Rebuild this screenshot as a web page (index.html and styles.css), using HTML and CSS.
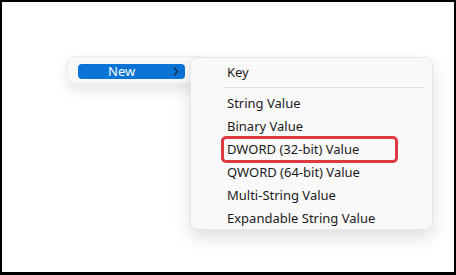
FILE: index.html
```html
<!DOCTYPE html>
<html>
<head>
<meta charset="utf-8">
<link rel="stylesheet" href="styles.css">
</head>
<body>
<div class="frame">
  <div class="menu parent">
    <div class="item active">
      <span class="label">New</span>
      <svg class="chev" width="6" height="9" viewBox="0 0 6 9"><path d="M1.5 1 L4.5 4.5 L1.5 8" fill="none" stroke="#1a2a4a" stroke-width="1.2" stroke-linecap="round" stroke-linejoin="round"/></svg>
    </div>
  </div>
  <div class="menu sub">
    <div class="row">Key</div>
    <div class="sep"></div>
    <div class="row">String Value</div>
    <div class="row">Binary Value</div>
    <div class="row marked">DWORD (32-bit) Value</div>
    <div class="row">QWORD (64-bit) Value</div>
    <div class="row">Multi-String Value</div>
    <div class="row">Expandable String Value</div>
    <div class="clip"></div>
  </div>
</div>
</body>
</html>
```

FILE: styles.css
```css
html, body {
  margin: 0;
  padding: 0;
  background: #000;
}
.frame {
  position: relative;
  box-sizing: border-box;
  width: 456px;
  height: 272px;
  margin: 2px 2px 0 2px;
  width: 452px;
  height: 270px;
  background: #fff;
  overflow: hidden;
  font-family: "Noto Sans", "Open Sans", sans-serif;
  color: #1b1b1b;
}
.menu {
  position: absolute;
  box-sizing: border-box;
  background: #f9f9f9;
  border-radius: 8px;
}
.parent {
  left: 65px;
  top: 54px;
  width: 140px;
  height: 28px;
  padding: 7px 10px;
  border: 1px solid #ececec;
  box-shadow: 0 6px 14px rgba(0,0,0,0.10);
}
.parent .item {
  display: flex;
  align-items: center;
  height: 15px;
  width: 107px;
  background: #0a73d6;
  border-radius: 4px;
  box-sizing: border-box;
  padding-left: 30px;
  padding-right: 6px;
}
.parent .label {
  flex: 1;
  color: #fff;
  font-size: 13px;
  line-height: 15px;
}
.sub {
  left: 188px;
  top: 55px;
  width: 243px;
  height: 173px;
  padding: 3px 0 0 0;
  border: 1px solid #e6e6e6;
  box-shadow: 0 8px 18px rgba(0,0,0,0.13);
  overflow: hidden;
}
.row {
  height: 23px;
  line-height: 23px;
  padding-left: 36px;
  font-size: 13px;
  white-space: nowrap;
}
.sep {
  height: 1px;
  background: #e0e0e0;
  margin: 3px 7px 4px 33px;
}
.marked {
  position: relative;
}
.marked::after {
  content: "";
  position: absolute;
  left: 30px;
  top: 0;
  width: 177px;
  height: 27px;
  box-sizing: border-box;
  border: 3px solid #dc3a40;
  border-radius: 5px;
  top: -2px;
}
.clip {
  height: 1px;
  margin: 0 0 0 33px;
  background: #eaeaea;
}
```
